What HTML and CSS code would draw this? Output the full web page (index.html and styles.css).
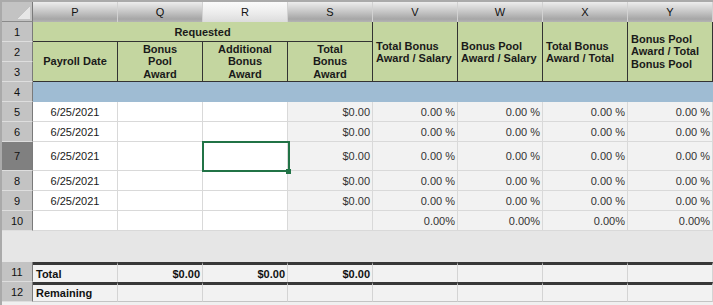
FILE: index.html
```html
<!DOCTYPE html>
<html>
<head>
<meta charset="utf-8">
<link rel="stylesheet" href="styles.css">
</head>
<body>
<div class="sheet">
  <div class="corner"></div>
  <div class="ch">P</div>
  <div class="ch">Q</div>
  <div class="ch sel">R</div>
  <div class="ch">S</div>
  <div class="ch">V</div>
  <div class="ch">W</div>
  <div class="ch">X</div>
  <div class="ch">Y</div>

  <div class="rh">1</div>
  <div class="hd req">Requested</div>
  <div class="hd side">Total Bonus<br>Award / Salary</div>
  <div class="hd side">Bonus Pool<br>Award / Salary</div>
  <div class="hd side">Total Bonus<br>Award / Total</div>
  <div class="hd side three">Bonus Pool<br>Award / Total<br>Bonus Pool</div>

  <div class="rh">2</div>
  <div class="hd sub">Payroll Date</div>
  <div class="hd sub three">Bonus<br>Pool<br>Award</div>
  <div class="hd sub three">Additional<br>Bonus<br>Award</div>
  <div class="hd sub three">Total<br>Bonus<br>Award</div>

  <div class="rh">3</div>

  <div class="rh">4</div>
  <div class="band"></div>

  <div class="rh">5</div>
  <div class="c w date">6/25/2021</div><div class="c w"></div><div class="c w"></div>
  <div class="c g num">$0.00</div><div class="c g num">0.00 %</div><div class="c g num">0.00 %</div><div class="c g num">0.00 %</div><div class="c g num">0.00 %</div>

  <div class="rh">6</div>
  <div class="c w date">6/25/2021</div><div class="c w"></div><div class="c w"></div>
  <div class="c g num">$0.00</div><div class="c g num">0.00 %</div><div class="c g num">0.00 %</div><div class="c g num">0.00 %</div><div class="c g num">0.00 %</div>

  <div class="rh rsel">7</div>
  <div class="c w date">6/25/2021</div><div class="c w"></div><div class="c w active"></div>
  <div class="c g num">$0.00</div><div class="c g num">0.00 %</div><div class="c g num">0.00 %</div><div class="c g num">0.00 %</div><div class="c g num">0.00 %</div>

  <div class="rh">8</div>
  <div class="c w date">6/25/2021</div><div class="c w"></div><div class="c w"></div>
  <div class="c g num">$0.00</div><div class="c g num">0.00 %</div><div class="c g num">0.00 %</div><div class="c g num">0.00 %</div><div class="c g num">0.00 %</div>

  <div class="rh">9</div>
  <div class="c w date">6/25/2021</div><div class="c w"></div><div class="c w"></div>
  <div class="c g num">$0.00</div><div class="c g num">0.00 %</div><div class="c g num">0.00 %</div><div class="c g num">0.00 %</div><div class="c g num">0.00 %</div>

  <div class="rh">10</div>
  <div class="c w"></div><div class="c w"></div><div class="c w"></div>
  <div class="c g num"></div><div class="c g num">0.00%</div><div class="c g num">0.00%</div><div class="c g num">0.00%</div><div class="c g num">0.00%</div>

  <div class="gap"></div>

  <div class="rh">11</div>
  <div class="t label">Total</div><div class="t num">$0.00</div><div class="t num">$0.00</div><div class="t num">$0.00</div>
  <div class="t"></div><div class="t"></div><div class="t"></div><div class="t"></div>

  <div class="rh">12</div>
  <div class="t last label">Remaining</div><div class="t last"></div><div class="t last"></div><div class="t last"></div>
  <div class="t last"></div><div class="t last"></div><div class="t last"></div><div class="t last"></div>
</div>
</body>
</html>
```
FILE: styles.css
```css
html, body {
  margin: 0;
  padding: 0;
  background: #f0f0f0;
}

.sheet {
  display: grid;
  grid-template-columns: 31px repeat(8, 85px);
  grid-template-rows: 20px 20px 20px 20px 20px 20px 20px 29px 20px 20px 20px 31px 20px 20px;
  width: 713px;
  height: 305px;
  box-sizing: border-box;
  border-top: 2px solid #aaaaaa;
  border-left: 2px solid #aaaaaa;
  background: #f0f0f0;
  font-family: "Liberation Sans", Arial, sans-serif;
  font-size: 11px;
  color: #1a1a1a;
}

.sheet > div {
  box-sizing: border-box;
  display: flex;
  align-items: center;
}

.corner {
  background:
    linear-gradient(to bottom right, transparent 50%, #e6e6e6 50%) no-repeat right 2px bottom 2px / 12px 12px,
    #c3c3c3;
  border-right: 1px solid #7a7a7a;
  border-bottom: 1px solid #8a8a8a;
}

.ch {
  justify-content: center;
  background: linear-gradient(to bottom, #ededed 0%, #cdcdcd 40%, #a6a6a6 85%, #b4b4b4 100%);
  border-right: 1px solid #d2d2d2;
  color: #111;
}

.ch.sel {
  background: linear-gradient(to bottom, #fbfbfb 0%, #ececec 55%, #dcdcdc 100%);
}

.rh {
  justify-content: center;
  background: #c3c3c3;
  border-right: 1px solid #7a7a7a;
  border-bottom: 1px solid #dedede;
  color: #111;
  grid-column: 1;
}

.rh.rsel {
  background: #808080;
}

.hd {
  background: #c4d6a0;
  border-right: 1px solid #333;
  border-bottom: 1px solid #333;
  font-weight: bold;
  color: #1a1a1a;
}

.req {
  grid-column: span 4;
  justify-content: center;
}

.side {
  grid-row: span 3;
  padding-left: 3px;
  line-height: 12px;
}

.sub {
  grid-row: span 2;
  justify-content: center;
  text-align: center;
  line-height: 12.5px;
}

.side.three {
  line-height: 12.5px;
}

.band {
  grid-column: span 8;
  background: #9fbcd3;
}

.c {
  border-right: 1px solid #d9d9d9;
  border-bottom: 1px solid #d9d9d9;
}

.w {
  background: #ffffff;
}

.g {
  background: #f2f2f2;
  color: #333;
}

.date {
  justify-content: center;
}

.num {
  justify-content: flex-end;
  padding-right: 2px;
}

.active {
  position: relative;
}

.active::before {
  content: "";
  position: absolute;
  left: -1px;
  top: -1px;
  width: 88px;
  height: 31px;
  box-sizing: border-box;
  border: 2px solid #217346;
}

.active::after {
  content: "";
  position: absolute;
  left: 83px;
  top: 27px;
  width: 5px;
  height: 5px;
  background: #217346;
}

.gap {
  grid-column: 1 / -1;
  background: #e6e6e6;
}

.t {
  background: #f2f2f2;
  border-top: 3px solid #383838;
  border-right: 1px solid #d4d4d4;
  font-weight: bold;
  color: #111;
}

.t.last {
  border-bottom: 1px solid #c4c4c4;
}

.label {
  padding-left: 3px;
}
```
